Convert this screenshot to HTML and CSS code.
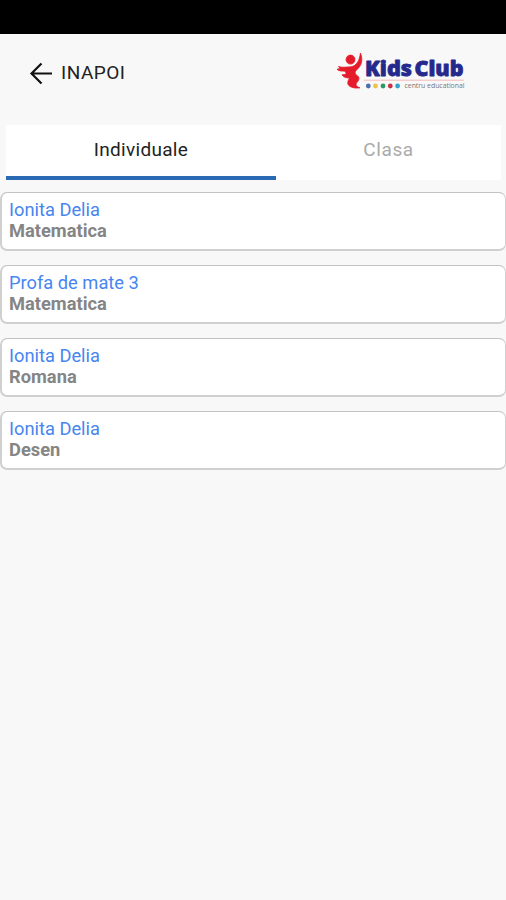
FILE: index.html
```html
<!DOCTYPE html>
<html lang="ro">
<head>
<meta charset="utf-8">
<title>KidsClub</title>
<link rel="stylesheet" href="styles.css">
</head>
<body>
<div class="status-bar"></div>
<header class="header">
  <a class="back">
    <svg class="back-icon" width="24" height="24" viewBox="0 0 24 24" fill="none" stroke="#111" stroke-width="2.2"><path d="M23 12.5H2.5M12.5 2.5 2.5 12.5l10 10"/></svg>
    <span class="back-label">INAPOI</span>
  </a>
  <svg class="logo" width="132" height="42" viewBox="0 0 132 42">
    <g fill="#e51b2b" stroke="#e51b2b" stroke-width=".8" stroke-linejoin="round">
      <circle cx="14.5" cy="9.6" r="4.5"/>
      <path d="M24.4 3C27 9 26 15.5 21 19.5C18.5 22 18.5 24 21.8 26C24 28 22.8 30.5 20.5 33C19.3 35 20.5 36.8 24 37.8C18.5 38.8 11.8 37 11.8 33C11.8 31 12.5 29.3 14 28C11 28.3 7.3 27.3 6 24.8L9.8 24.4C10.4 22.5 9.7 21.2 7.3 21.1C4.5 21 2.3 20.8 1 19.2L4.2 18.6L2.5 16.5C6 17.8 10 17 15 16.8C20.5 16 23.6 10.5 24.4 3Z"/>
    </g>
    <text class="logo-name" x="29" y="25.6" textLength="47" lengthAdjust="spacingAndGlyphs">Kids</text>
    <text class="logo-name" x="78.5" y="25.6" textLength="49" lengthAdjust="spacingAndGlyphs">Club</text>
    <path d="M28 30.2H128" stroke="#f3a9a9" stroke-width=".8"/>
    <circle cx="32.3" cy="36" r="2.4" fill="#4a70ad"/>
    <circle cx="39.5" cy="36" r="2.4" fill="#e9c34c"/>
    <circle cx="47" cy="36" r="2.4" fill="#319665"/>
    <circle cx="54.3" cy="36" r="2.4" fill="#c93345"/>
    <circle cx="61.6" cy="36" r="2.4" fill="#35a1ce"/>
    <text class="logo-tag" x="68.5" y="37.8" textLength="60" lengthAdjust="spacingAndGlyphs">centru educational</text>
  </svg>
</header>
<nav class="tabs">
  <a class="tab tab-active">Individuale</a>
  <a class="tab">Clasa</a>
</nav>
<main class="list">
  <article class="card"><div class="name">Ionita Delia</div><div class="subject">Matematica</div></article>
  <article class="card"><div class="name">Profa de mate 3</div><div class="subject">Matematica</div></article>
  <article class="card"><div class="name">Ionita Delia</div><div class="subject">Romana</div></article>
  <article class="card"><div class="name">Ionita Delia</div><div class="subject">Desen</div></article>
</main>
</body>
</html>
```
FILE: styles.css
```css
* { box-sizing: border-box; }
body {
  margin: 0;
  min-height: 900px;
  background: #f8f8f8;
  font-family: Roboto, "Liberation Sans", sans-serif;
}
.status-bar { height: 34px; background: #000; }
.header {
  display: flex;
  justify-content: space-between;
  height: 91px;
  padding: 16px 34px 0 29px;
}
.back {
  display: flex;
  align-items: center;
  gap: 8px;
  height: 46px;
  color: #222;
  font-size: 19px;
  letter-spacing: .5px;
}
.back-label { padding-bottom: 2px; }
.logo { display: block; margin-right: 4px; }
.logo-name {
  fill: #25298c;
  stroke: #25298c;
  stroke-width: .8;
  stroke-linejoin: round;
  font: 800 21px "Open Sans", sans-serif;
}
.logo-tag { fill: #777; font: 7px "Open Sans", sans-serif; }
.tabs {
  display: flex;
  height: 55px;
  margin: 0 5px 0 6px;
  background: #fff;
}
.tab {
  flex: 0 0 270px;
  padding-top: 13px;
  color: #aaa;
  font-size: 19px;
  line-height: 24px;
  letter-spacing: .3px;
  text-align: center;
}
.tab + .tab { flex: 1; letter-spacing: .6px; }
.tab-active { color: #222; border-bottom: 4px solid #2a6ab5; }
.list { display: grid; gap: 14px; padding-top: 12px; }
.card {
  height: 59px;
  padding: 6px 8px 0 7px;
  border: 2px solid #d0d0d0;
  border-top-width: 1px;
  border-right-width: 1px;
  border-top-color: #c2c2c2;
  border-radius: 7px;
  background: #fff;
  font-size: 18.3px;
  line-height: 21px;
}
.name { color: #4785f0; }
.subject { color: #858585; font-weight: 700; }
```
